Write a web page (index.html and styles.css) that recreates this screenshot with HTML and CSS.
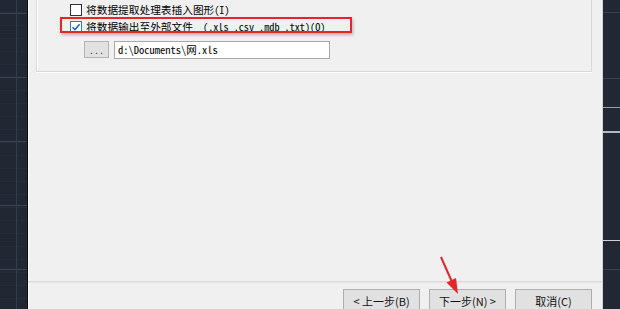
FILE: index.html
```html
<!DOCTYPE html>
<html lang="zh-CN">
<head>
<meta charset="UTF-8" />
<title>数据提取 - 选择输出</title>
<link rel="stylesheet" href="styles.css">
</head>
<body>
  <div class="screen">
    <!-- drawing area behind the dialog -->
    <div class="canvas canvas-left"></div>

    <div class="dialog">
      <div class="group">
        <label class="opt">
          <span class="box"></span>
          <span class="txt">将数据提取处理表插入图形<span class="mono">(I)</span></span>
        </label>
        <label class="opt">
          <span class="box checked">
            <svg width="10" height="10" viewBox="0 0 10 10"><path d="M1.5 5.2 L4 7.6 L8.6 2.2" fill="none" stroke="#1f64c0" stroke-width="1.5"/></svg>
          </span>
          <span class="txt">将数据输出至外部文件<span class="mono">  (.xls .csv .mdb .txt)(O)</span></span>
        </label>
        <div class="file-row">
          <button class="browse">...</button>
          <div class="path">d:\Documents\网.xls</div>
        </div>
      </div>

      <div class="footer">
        <button class="btn">&lt; 上一步(B)</button>
        <button class="btn">下一步(N) &gt;</button>
        <button class="btn">取消(C)</button>
      </div>
    </div>

    <div class="canvas canvas-right"></div>
  </div>

  <!-- annotations -->
  <div class="highlight"></div>
  <svg class="arrow" width="620" height="309" viewBox="0 0 620 309">
    <line x1="441" y1="257" x2="452" y2="282" stroke="#e5252a" stroke-width="2"/>
    <polygon points="458,294 446.5,282.5 456,278" fill="#e5252a"/>
  </svg>
</body>
</html>
```

FILE: styles.css
```css
:root {
  --face: #f0f0f0;
  --cad: #212833;
  --red: #e5252a;
  --cjk: 'Noto Sans CJK SC', 'Noto Sans', sans-serif;
  --mono: 'Noto Sans Mono CJK SC', 'Liberation Mono', monospace;
}

* {
  box-sizing: border-box;
}

html,
body {
  margin: 0;
  padding: 0;
  height: 309px;
  overflow: hidden;
  background: var(--face);
  font-family: var(--cjk);
}

.screen {
  display: flex;
  height: 312px;
}

/* ------------ CAD CANVAS ------------- */
.canvas {
  flex: none;
  background-color: var(--cad);
}
.canvas-left {
  width: 27px;
  background-image:
    linear-gradient(90deg, transparent 16px, #353d4a 16px, #353d4a 17px, transparent 17px),
    repeating-linear-gradient(180deg, transparent 0 13px, #3a4351 13px 14px, transparent 14px 64px),
    repeating-linear-gradient(180deg, transparent 0 12px, #262d38 12px 13px);
}
.canvas-right {
  width: 17px;
  background-image:
    linear-gradient(180deg,
      transparent 12px, #39414e 12px 13px,
      transparent 13px 78px, #39414e 78px 79px,
      transparent 79px 107px, #9aa0a8 107px 108px,
      transparent 108px 131px, #b5b9bf 131px 133px,
      transparent 133px 240px, #d0d2d5 240px 241px,
      transparent 241px 269px, #39414e 269px 270px,
      transparent 270px);
}

/* ------------ DIALOG ------------- */
.dialog {
  width: 576px;
  flex: none;
  display: flex;
  flex-direction: column;
  background: var(--face);
  border-left: 1px solid #0d0d0d;
  border-right: 1px solid #d4d4d4;
  box-shadow: inset 1px 0 #fbfbfb;
}

.group {
  margin: 0 10px 0 8px;
  height: 72px;
  padding: 1px 0 0 33px;
  border: 1px solid #d9d9d9;
  border-top: none;
  box-shadow: inset 1px 0 #fff, 0 1px #fff;
}

.opt {
  display: flex;
  align-items: center;
  height: 17px;
  font-size: 10.7px;
  color: #000;
}
.box {
  width: 12px;
  height: 12px;
  margin-right: 4px;
  border: 1px solid #333;
  background: #fff;
  display: flex;
  align-items: center;
  justify-content: center;
}
.box.checked { border-color: #3b78c4; }
.mono {
  font-family: var(--mono);
  font-size: 10.2px;
  white-space: pre;
}

.file-row {
  display: flex;
  align-items: flex-start;
  gap: 5px;
  margin: 6px 0 0 14px;
}
.browse {
  width: 25px;
  height: 17px;
  padding: 0 0 3px;
  background: #e1e1e1;
  border: 1px solid #b4b4b4;
  font-family: var(--mono);
  font-size: 10px;
  color: #333;
}
.path {
  width: 216px;
  height: 18px;
  padding: 0 0 0 3px;
  background: #fff;
  border: 1px solid #a9a9a9;
  font-family: var(--mono);
  font-size: 10.5px;
  line-height: 16px;
  color: #000;
}

/* ------------ FOOTER ------------- */
.footer {
  margin-top: auto;
  display: flex;
  justify-content: flex-end;
  gap: 9px;
  padding: 7px 10px 0 0;
  border-top: 1px solid #dadada;
  box-shadow: inset 0 1px #e6e6e6;
}
.btn {
  width: 77px;
  height: 23px;
  padding: 0;
  background: #e1e1e1;
  border: 1px solid #adadad;
  font-family: var(--cjk);
  font-size: 11px;
  color: #111;
}

/* ------------ ANNOTATIONS ------------- */
.highlight {
  position: absolute;
  left: 60px;
  top: 17px;
  width: 292px;
  height: 16px;
  border: 2px solid var(--red);
  box-shadow: 1px 2px 3px rgba(0, 0, 0, 0.25);
}
.arrow {
  position: absolute;
  left: 0;
  top: 0;
}
```
